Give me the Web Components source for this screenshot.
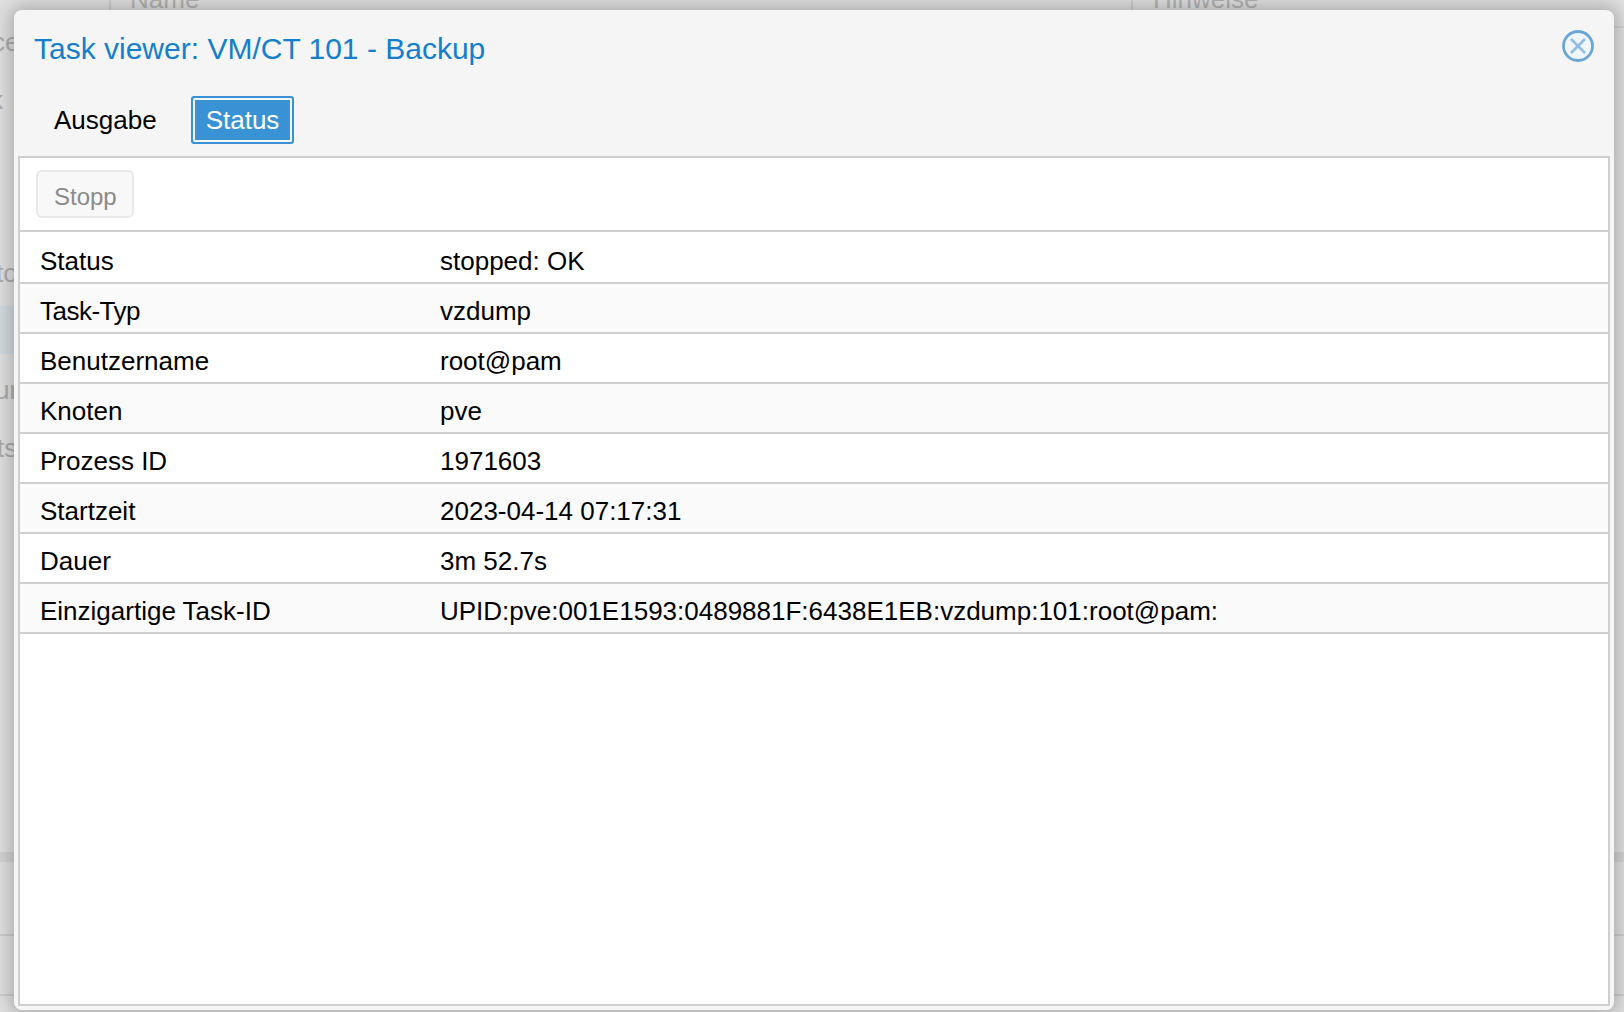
<!DOCTYPE html>
<html>
<head>
<meta charset="utf-8">
<title>Task viewer</title>
<style>
  html, body { margin: 0; height: 100%; overflow: hidden; }
  body { font-family: "Liberation Sans", Arial, sans-serif; font-size: 26px; color: #000; }
</style>
</head>
<body>
<template id="page-backdrop-tpl">
  <style>
    :host { display: block; position: absolute; inset: 0; background: #fff; overflow: hidden; color: #777; }
    .head { display: flex; height: 26px; margin: 0 0 2px 109px; border-bottom: 2px solid #d8d8d8; color: #888; }
    .head span { display: block; box-sizing: border-box; height: 26px; line-height: 30px; overflow: hidden; border-left: 2px solid #ccc; }
    .head .name { width: 1022px; padding-left: 19px; }
    .head .note { padding-left: 20px; }
    .head i { display: block; font-style: normal; margin-top: -16px; }
    .side { width: 40px; white-space: nowrap; }
    .side div { height: 30px; line-height: 30px; }
    .sel { background: #ddf2ff; }
    .mask { position: absolute; inset: 0; background: rgba(205,205,205,.62); }
    .band { position: absolute; left: 0; right: 0; height: 2px; background: #ccc; }
  </style>
  <div class="head">
    <span class="name"><i>Name</i></span>
    <span class="note"><i>Hinweise</i></span>
  </div>
  <div class="side">
    <div style="margin-top:-3px;margin-left:-8px">ce</div>
    <div style="margin-top:28px;margin-left:-10px">k</div>
    <div style="margin-top:143px;margin-left:-4px">to</div>
    <div class="sel" style="margin-top:18px;height:48px"></div>
    <div style="margin-top:21px;margin-left:-5px">ur</div>
    <div style="margin-top:28px;margin-left:-3px">ts</div>
  </div>
  <div class="band" style="top:852px;height:10px;background:#ddd"></div>
  <div class="band" style="top:934px"></div>
  <div class="band" style="top:994px"></div>
  <div class="mask"></div>
</template>

<template id="task-window-tpl">
  <style>
    :host { display: flex; flex-direction: column; position: absolute; left: 14px; top: 10px; width: 1600px; height: 1000px; box-sizing: border-box; background: #f5f5f5; border-radius: 8px; padding: 0 4px 4px; box-shadow: 0 0 18px 4px rgba(0,0,0,.24); }
    .title { display: flex; justify-content: space-between; align-items: center; box-sizing: border-box; height: 72px; padding: 6px 16px 0 16px; }
    .title h1 { margin: 0; font: normal 30px "Liberation Sans", Arial, sans-serif; color: #157fcc; }
    .title svg { width: 32px; height: 32px; display: block; margin-top: -6px; filter: blur(.7px); }
    .tabs { display: flex; align-items: center; gap: 16px; box-sizing: border-box; height: 74px; padding: 2px 0 0 18px; }
    .panel { flex: 1; display: flex; flex-direction: column; min-height: 0; background: #fff; border: 2px solid #cfcfcf; }
  </style>
  <div class="title">
    <h1><slot name="title"></slot></h1>
    <svg viewBox="0 0 32 32" fill="none">
      <circle cx="16" cy="16" r="14.5" stroke="#6ba6d8" stroke-width="2.8" fill="#f0f5fa"/>
      <path d="M9 9 23 23M23 9 9 23" stroke="#8dbde6" stroke-width="2.6"/>
    </svg>
  </div>
  <div class="tabs"><slot name="tabs"></slot></div>
  <div class="panel"><slot></slot></div>
</template>

<template id="tab-button-tpl">
  <style>
    :host { display: block; box-sizing: border-box; height: 48px; padding: 0 16px; line-height: 44px; border: 2px solid transparent; border-radius: 3px; }
    :host([active]) { color: #fff; background: #3892d4; border-color: #3892d4; box-shadow: inset 0 0 0 2px #f5f5f5; padding: 0 13px; }
  </style>
  <slot></slot>
</template>

<template id="task-toolbar-tpl">
  <style>
    :host { display: flex; align-items: center; box-sizing: border-box; height: 74px; padding: 0 16px; border-bottom: 2px solid #cfcfcf; }
    .btn { box-sizing: border-box; height: 48px; padding: 0 15px 0 16px; font-size: 24px; line-height: 50px; color: #8a8a8a; background: #f8f8f8; border: 2px solid #e8e8e8; border-radius: 6px; }
  </style>
  <div class="btn"><slot></slot></div>
</template>

<template id="status-row-tpl">
  <style>
    :host { display: grid; grid-template-columns: 400px 1fr; box-sizing: border-box; height: 50px; padding-left: 20px; line-height: 54px; border-bottom: 2px solid #cfcfcf; }
    :host(:nth-of-type(even)) { background: #fafafa; }
    :host(:first-of-type) { height: 52px; padding-top: 2px; }
  </style>
  <div><slot name="key"></slot></div>
  <div><slot name="value"></slot></div>
</template>

<page-backdrop></page-backdrop>
<task-window>
  <span slot="title">Task viewer: VM/CT 101 - Backup</span>
  <tab-button slot="tabs">Ausgabe</tab-button>
  <tab-button slot="tabs" active>Status</tab-button>
  <task-toolbar>Stopp</task-toolbar>
  <status-row><span slot="key">Status</span><span slot="value">stopped: OK</span></status-row>
  <status-row><span slot="key" style="letter-spacing:-.5px">Task-Typ</span><span slot="value">vzdump</span></status-row>
  <status-row><span slot="key">Benutzername</span><span slot="value">root@pam</span></status-row>
  <status-row><span slot="key">Knoten</span><span slot="value">pve</span></status-row>
  <status-row><span slot="key">Prozess ID</span><span slot="value">1971603</span></status-row>
  <status-row><span slot="key">Startzeit</span><span slot="value">2023-04-14 07:17:31</span></status-row>
  <status-row><span slot="key">Dauer</span><span slot="value">3m 52.7s</span></status-row>
  <status-row><span slot="key">Einzigartige Task-ID</span><span slot="value">UPID:pve:001E1593:0489881F:6438E1EB:vzdump:101:root@pam:</span></status-row>
</task-window>

<script>
// every element just stamps its template into an open shadow root
function define(name, tplId) {
  customElements.define(name, class extends HTMLElement {
    constructor() {
      super();
      this.attachShadow({ mode: 'open' });
      this.shadowRoot.appendChild(document.getElementById(tplId).content.cloneNode(true));
    }
  });
}
define('page-backdrop', 'page-backdrop-tpl');
define('task-window', 'task-window-tpl');
define('tab-button', 'tab-button-tpl');
define('task-toolbar', 'task-toolbar-tpl');
define('status-row', 'status-row-tpl');
</script>
</body>
</html>
